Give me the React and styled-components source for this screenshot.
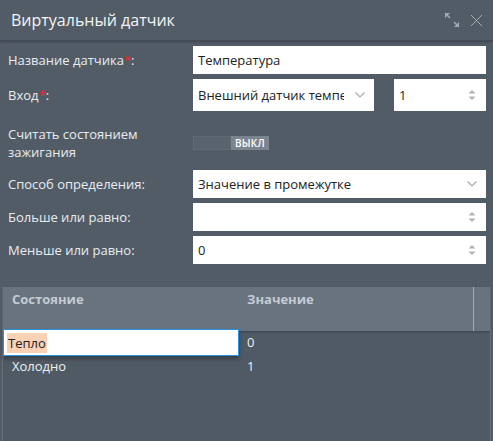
import React from "react";
import styled, { createGlobalStyle } from "styled-components";

const GlobalStyle = createGlobalStyle`
  html, body {
    margin: 0;
    padding: 0;
    background: #525c67;
  }
  body {
    font-family: "Open Sans", "Noto Sans", sans-serif;
    font-size: 13px;
    color: #e9ecef;
  }
`;

const Window = styled.div`
  width: 493px;
  height: 441px;
  background: #525c67;
  display: flex;
  flex-direction: column;
  overflow: hidden;
`;

const TitleBar = styled.div`
  height: 40px;
  flex: none;
  display: flex;
  align-items: center;
  justify-content: space-between;
  padding: 0 10px 0 11px;
  border-bottom: 1px solid #434c56;
  box-shadow: 0 1px 2px rgba(0, 0, 0, 0.25);
  h1 {
    margin: 0;
    font-size: 16px;
    font-weight: 400;
    color: #f2f4f6;
  }
`;

const Tools = styled.div`
  display: flex;
  align-items: center;
  gap: 10px;
  svg {
    display: block;
  }
`;

const Form = styled.div`
  padding: 5px 7px 0 8px;
  display: flex;
  flex-direction: column;
`;

const Row = styled.div`
  display: grid;
  grid-template-columns: 185px 1fr;
  align-items: center;
  min-height: ${(p) => p.$h || 28}px;
  margin-top: ${(p) => p.$mt || 0}px;
`;

const Label = styled.label`
  font-size: 13px;
  line-height: 18px;
  color: #e9ecef;
  b {
    color: #ff1a1a;
    font-weight: 400;
  }
`;

const Field = styled.div`
  display: flex;
  gap: 20px;
`;

const Box = styled.div`
  position: relative;
  height: ${(p) => p.$h || 28}px;
  width: ${(p) => (p.$w ? p.$w + "px" : "auto")};
  flex: ${(p) => (p.$w ? "none" : 1)};
  background: #fff;
  color: #222;
  display: flex;
  align-items: center;
  padding: 0 ${(p) => p.$pr || 26}px 0 5px;
  box-sizing: border-box;
  font-size: 13px;
  white-space: nowrap;
  overflow: hidden;
  span {
    overflow: hidden;
    text-overflow: clip;
  }
`;

const Side = styled.div`
  position: absolute;
  right: ${(p) => p.$r || 9}px;
  top: 0;
  bottom: 0;
  display: flex;
  align-items: center;
  svg {
    display: block;
  }
`;

const Toggle = styled.div`
  display: flex;
  height: 14px;
  width: 76px;
  font-size: 10px;
  font-weight: 600;
`;

const ToggleTrack = styled.div`
  flex: 1;
  background: #59636e;
  border: 1px dotted #66707b;
`;

const ToggleKnob = styled.div`
  width: 38px;
  background: #7b8590;
  color: #fff;
  display: flex;
  align-items: center;
  justify-content: center;
  letter-spacing: 0.2px;
`;

const Table = styled.div`
  margin: 23px 2px 0 2px;
  flex: 1;
  border-left: 1px solid #66707b;
  border-right: 1px solid #66707b;
  background: #505a65;
  display: flex;
  flex-direction: column;
`;

const Head = styled.div`
  height: 44px;
  flex: none;
  background: #68737f;
  display: grid;
  grid-template-columns: 235px 1fr 16px;
  box-shadow: 0 1px 2px rgba(0, 0, 0, 0.25);
`;

const HeadCell = styled.div`
  padding: 3px 9px;
  font-weight: 700;
  font-size: 13px;
  color: #c5ccd3;
  border-right: ${(p) => (p.$divider ? "1px solid #a3abb4" : "none")};
`;

const BodyRow = styled.div`
  display: grid;
  grid-template-columns: 235px 1fr;
  height: 24px;
  align-items: center;
`;

const Cell = styled.div`
  position: relative;
  height: 100%;
  display: flex;
  align-items: center;
  padding: 0 9px 2px;
  box-sizing: border-box;
  color: #eef0f2;
`;

const Editor = styled.div`
  position: absolute;
  left: 0;
  top: -2px;
  width: 236px;
  height: 27px;
  box-sizing: border-box;
  background: #fff;
  border: 1px solid #2b93e6;
  box-shadow: 0 3px 4px rgba(0, 0, 0, 0.3);
  display: flex;
  align-items: center;
  padding-left: 3px;
  mark {
    background: #f9d2b6;
    color: #222;
    padding: 1px 1px;
  }
`;

const Chevron = () => (
  <svg width="10" height="6" viewBox="0 0 10 6">
    <path d="M0.5 0.5 L5 5 L9.5 0.5" fill="none" stroke="#a3aab2" strokeWidth="1.2" />
  </svg>
);

const Spin = () => (
  <svg width="8" height="12" viewBox="0 0 8 12">
    <path d="M0.5 4.5 L4 1 L7.5 4.5 Z" fill="#adb4bb" />
    <path d="M0.5 7.5 L4 11 L7.5 7.5 Z" fill="#adb4bb" />
  </svg>
);

const App = () => {
  return (
    <>
      <GlobalStyle />
      <Window>
        <TitleBar>
          <h1>Виртуальный датчик</h1>
          <Tools>
            <svg width="16" height="16" viewBox="0 0 16 16">
              <path d="M1 1 L6 1 L1 6 Z" fill="#9fa7b0" />
              <path d="M2.5 2.5 L6 6" stroke="#9fa7b0" strokeWidth="1.6" />
              <path d="M15 15 L10 15 L15 10 Z" fill="#9fa7b0" />
              <path d="M13.5 13.5 L10 10" stroke="#9fa7b0" strokeWidth="1.6" />
            </svg>
            <svg width="13" height="13" viewBox="0 0 13 13">
              <path d="M1 1 L12 12 M12 1 L1 12" stroke="#a5adb5" strokeWidth="1" />
            </svg>
          </Tools>
        </TitleBar>

        <Form>
          <Row $h={28}>
            <Label>
              Название датчика<b>*</b>:
            </Label>
            <Field>
              <Box>
                <span>Температура</span>
              </Box>
            </Field>
          </Row>

          <Row $h={32} $mt={5}>
            <Label>
              Вход<b>*</b>:
            </Label>
            <Field>
              <Box $h={32} $w={181} $pr={30}>
                <span>Внешний датчик температуры</span>
                <Side>
                  <Chevron />
                </Side>
              </Box>
              <Box $h={32}>
                <span>1</span>
                <Side $r={10}>
                  <Spin />
                </Side>
              </Box>
            </Field>
          </Row>

          <Row $h={44} $mt={10}>
            <Label>
              Считать состоянием
              <br />
              зажигания
            </Label>
            <Toggle>
              <ToggleTrack />
              <ToggleKnob>ВЫКЛ</ToggleKnob>
            </Toggle>
          </Row>

          <Row $h={28} $mt={5}>
            <Label>Способ определения:</Label>
            <Field>
              <Box>
                <span>Значение в промежутке</span>
                <Side>
                  <Chevron />
                </Side>
              </Box>
            </Field>
          </Row>

          <Row $h={28} $mt={5}>
            <Label>Больше или равно:</Label>
            <Field>
              <Box>
                <span></span>
                <Side $r={10}>
                  <Spin />
                </Side>
              </Box>
            </Field>
          </Row>

          <Row $h={28} $mt={5}>
            <Label>Меньше или равно:</Label>
            <Field>
              <Box>
                <span>0</span>
                <Side $r={10}>
                  <Spin />
                </Side>
              </Box>
            </Field>
          </Row>
        </Form>

        <Table>
          <Head>
            <HeadCell>Состояние</HeadCell>
            <HeadCell $divider>Значение</HeadCell>
            <div />
          </Head>
          <BodyRow>
            <Cell>
              <Editor>
                <mark>Тепло</mark>
              </Editor>
            </Cell>
            <Cell>0</Cell>
          </BodyRow>
          <BodyRow>
            <Cell>Холодно</Cell>
            <Cell>1</Cell>
          </BodyRow>
        </Table>
      </Window>
    </>
  );
};

export default App;
